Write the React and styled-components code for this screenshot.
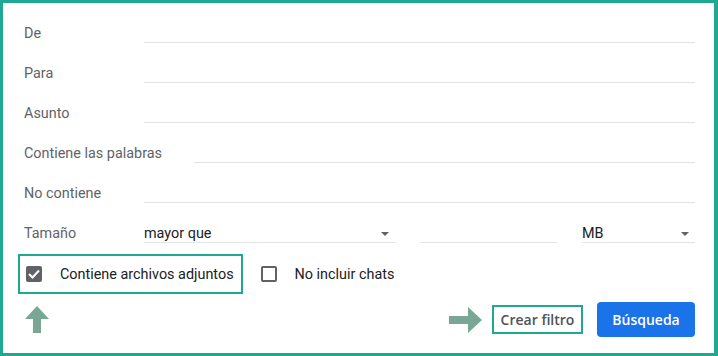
import React from "react";
import styled, { createGlobalStyle } from "styled-components";

const GlobalStyle = createGlobalStyle`
  body {
    margin: 0;
    background: #ffffff;
    font-family: Roboto, "Liberation Sans", sans-serif;
  }
`;

const Frame = styled.div`
  width: 718px;
  height: 356px;
  box-sizing: border-box;
  border: 3px solid #1fa993;
  border-right-width: 4px;
  padding: 0 19px 0 21px;
  background: #fff;
  display: flex;
  flex-direction: column;
`;

const Row = styled.div`
  height: 40px;
  display: flex;
  align-items: flex-end;
`;

const Label = styled.div`
  min-width: 88px;
  margin-right: 32px;
  font-size: 14.4px;
  line-height: 18px;
  color: #5f6368;
`;

const Field = styled.div`
  flex: ${(p) => (p.$width ? "none" : "1")};
  width: ${(p) => (p.$width ? `${p.$width}px` : "auto")};
  margin-right: ${(p) => p.$gap || 0}px;
  height: 17px;
  padding-top: 5px;
  line-height: 17px;
  border-bottom: 1px solid #e3e3e3;
  display: flex;
  align-items: center;
  justify-content: space-between;
  font-size: 14.4px;
  color: #202124;
`;

const Caret = styled.span`
  width: 0;
  height: 0;
  border-left: 4px solid transparent;
  border-right: 4px solid transparent;
  border-top: 4px solid #5f6368;
  margin-right: 6px;
`;

const CheckRow = styled.div`
  display: flex;
  align-items: center;
  margin-top: 11px;
  margin-left: -6px;
`;

const Option = styled.label`
  display: flex;
  align-items: center;
  gap: 18px;
  box-sizing: border-box;
  height: 40px;
  padding: 0 ${(p) => (p.$marked ? "7px" : "0")} 0 6px;
  border: 2px solid ${(p) => (p.$marked ? "#1fa993" : "transparent")};
  margin-right: ${(p) => (p.$marked ? "10px" : "0")};
  font-size: 14.4px;
  color: #202124;
`;

const Box = styled.span`
  width: 16px;
  height: 16px;
  box-sizing: border-box;
  border-radius: 2px;
  background: ${(p) => (p.$checked ? "#5f6368" : "transparent")};
  border: ${(p) => (p.$checked ? "none" : "2px solid #5f6368")};
  display: flex;
  align-items: center;
  justify-content: center;
`;

const ActionRow = styled.div`
  display: flex;
  align-items: center;
  margin-top: 8px;
  height: 35px;
`;

const Spacer = styled.div`
  flex: 1;
`;

const FilterLink = styled.div`
  box-sizing: border-box;
  height: 29px;
  width: 91px;
  margin: 0 14px 0 9px;
  border: 2px solid #1fa993;
  display: flex;
  align-items: center;
  justify-content: center;
  font-family: "Open Sans", Roboto, sans-serif;
  font-weight: 600;
  font-size: 14px;
  color: #4f5358;
`;

const SearchButton = styled.button`
  width: 98px;
  height: 35px;
  border: none;
  border-radius: 4px;
  background: #1a73e8;
  color: #fff;
  font-family: "Open Sans", Roboto, sans-serif;
  font-weight: 600;
  font-size: 14px;
  padding: 0;
`;

const UpArrow = () => (
  <svg width="26" height="28" viewBox="0 0 26 28">
    <polygon points="13,0 25,13 17,13 17,27 9,27 9,13 1,13" fill="#78a895" />
  </svg>
);

const RightArrow = () => (
  <svg width="34" height="26" viewBox="0 0 34 26">
    <polygon points="0,9 19,9 19,0 33,13 19,26 19,17 0,17" fill="#78a895" />
  </svg>
);

const Check = () => (
  <svg width="12" height="10" viewBox="0 0 12 10">
    <path d="M1 5 L4.5 8.5 L11 1.5" stroke="#fff" strokeWidth="2" fill="none" />
  </svg>
);

const fields = ["De", "Para", "Asunto", "Contiene las palabras", "No contiene"];

export default function App() {
  return (
    <>
      <GlobalStyle />
      <Frame>
        {fields.map((f) => (
          <Row key={f}>
            <Label>{f}</Label>
            <Field />
          </Row>
        ))}
        <Row>
          <Label>Tamaño</Label>
          <Field $width={251} $gap={26}>
            mayor que
            <Caret />
          </Field>
          <Field $width={136} $gap={25} />
          <Field>
            MB
            <Caret />
          </Field>
        </Row>
        <CheckRow>
          <Option $marked>
            <Box $checked>
              <Check />
            </Box>
            Contiene archivos adjuntos
          </Option>
          <Option>
            <Box />
            No incluir chats
          </Option>
        </CheckRow>
        <ActionRow>
          <UpArrow />
          <Spacer />
          <RightArrow />
          <FilterLink>Crear filtro</FilterLink>
          <SearchButton>Búsqueda</SearchButton>
        </ActionRow>
      </Frame>
    </>
  );
}
